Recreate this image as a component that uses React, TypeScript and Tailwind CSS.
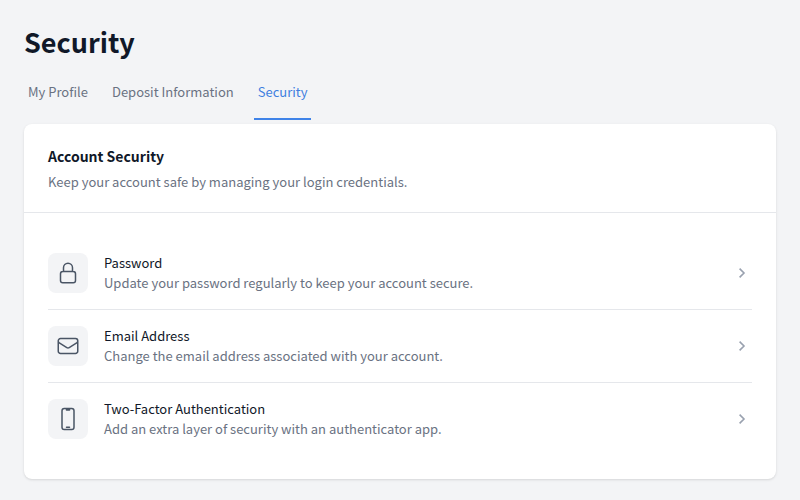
import React from "react";
import {
  HiOutlineLockClosed,
  HiOutlineEnvelope,
  HiOutlineDevicePhoneMobile,
} from "react-icons/hi2";

const tabs = ["My Profile", "Deposit Information", "Security"];

const items = [
  {
    title: "Password",
    description: "Update your password regularly to keep your account secure.",
    icon: HiOutlineLockClosed,
  },
  {
    title: "Email Address",
    description: "Change the email address associated with your account.",
    icon: HiOutlineEnvelope,
  },
  {
    title: "Two-Factor Authentication",
    description: "Add an extra layer of security with an authenticator app.",
    icon: HiOutlineDevicePhoneMobile,
  },
];

const Chevron = () => (
  <svg
    viewBox="0 0 20 20"
    fill="none"
    stroke="currentColor"
    strokeWidth="1.6"
    className="size-5 text-gray-400"
    aria-hidden="true"
  >
    <path d="M7.6 5.6 12 10l-4.4 4.4" />
  </svg>
);

const App = () => {
  return (
    <main className="min-h-screen bg-gray-100 px-6 pt-6 pb-5 font-['Noto_Sans_CJK_JP',sans-serif]">
      <h1 className="text-[27px] leading-9 font-bold text-gray-900">Security</h1>

      <nav className="mt-1.5 mb-1 flex gap-4">
        {tabs.map((tab) => (
          <a
            key={tab}
            href="#"
            className={
              tab === "Security"
                ? "border-b-2 border-[#3f83e8] px-1 py-4 text-[13px] leading-5 text-[#3f7fe0]"
                : "border-b-2 border-transparent px-1 py-4 text-[13px] leading-5 text-gray-500"
            }
          >
            {tab}
          </a>
        ))}
      </nav>

      <section className="rounded-lg bg-white shadow-sm">
        <div className="border-b border-gray-200 px-6 py-5">
          <h2 className="text-sm leading-6 font-bold text-gray-900">Account Security</h2>
          <p className="mt-1 text-[13px] leading-5 text-gray-500">
            Keep your account safe by managing your login credentials.
          </p>
        </div>
        <ul className="divide-y divide-gray-200 p-6">
          {items.map(({ title, description, icon: Icon }) => (
            <li key={title}>
              <button className="flex w-full items-center gap-4 py-4 text-left">
                <span className="flex size-10 shrink-0 items-center justify-center rounded-lg bg-gray-100">
                  <Icon className="size-6 text-gray-600" />
                </span>
                <span className="flex flex-1 flex-col text-[13px] leading-5">
                  <span className="text-gray-900">{title}</span>
                  <span className="text-gray-500">{description}</span>
                </span>
                <Chevron />
              </button>
            </li>
          ))}
        </ul>
      </section>
    </main>
  );
};

export default App;
